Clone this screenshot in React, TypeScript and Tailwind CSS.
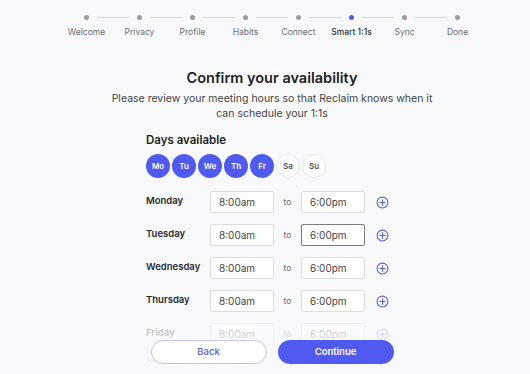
import React from "react";

const steps = ["Welcome", "Privacy", "Profile", "Habits", "Connect", "Smart 1:1s", "Sync", "Done"];
const days = [
  { d: "Mo", on: true },
  { d: "Tu", on: true },
  { d: "We", on: true },
  { d: "Th", on: true },
  { d: "Fr", on: true },
  { d: "Sa", on: false },
  { d: "Su", on: false },
];
const rows = ["Monday", "Tuesday", "Wednesday", "Thursday", "Friday"];

function PlusIcon() {
  return (
    <svg width="13" height="13" viewBox="0 0 24 24" fill="none" stroke="#5560ee" strokeWidth="2" strokeLinecap="round">
      <circle cx="12" cy="12" r="10" />
      <path d="M12 7v10M7 12h10" />
    </svg>
  );
}

export default function App() {
  return (
    <div
      className="relative h-[374px] w-[530px] overflow-hidden bg-[#f8f9fc] pl-[14px] text-[#333]"
      style={{ fontFamily: "Inter, 'Noto Sans', sans-serif" }}
    >
      {/* stepper */}
      <div className="flex justify-center pt-[15px]">
        {steps.map((s, i) => (
          <div key={s} className="relative flex w-[53px] flex-col items-center">
            {i > 0 && <div className="absolute left-[-16px] top-[2px] h-px w-[32px] bg-[#d4d5da]" />}
            <div className={`h-[5px] w-[5px] rounded-full ${i === 5 ? "bg-[#4f5bf0]" : "bg-[#9b9ca1]"}`} />
            <div
              className={`mt-[6px] whitespace-nowrap text-[8.5px] leading-[12px] ${
                i === 5 ? "font-medium text-[#2e2e33]" : "text-[#6b6c72]"
              }`}
            >
              {s}
            </div>
          </div>
        ))}
      </div>

      <div className="mt-[30px] text-center text-[14.5px] font-semibold leading-[20px] text-[#222]">
        Confirm your availability
      </div>
      <div className="mx-auto mt-[3px] w-[340px] text-center text-[10.5px] leading-[15px] text-[#444]">
        Please review your meeting hours so that Reclaim knows when it can schedule your 1:1s
      </div>

      <div className="mx-auto mt-[11px] w-[252px]">
        <div className="text-[11.5px] font-semibold leading-[16px] text-[#222]">Days available</div>
        <div className="mt-[6px] flex gap-[2px]">
          {days.map((x) => (
            <div
              key={x.d}
              className={`flex h-[24px] w-[24px] items-center justify-center rounded-full text-[8px] font-semibold ${
                x.on ? "bg-[#4f5bf0] text-white" : "border border-[#e6e7eb] bg-white font-medium text-[#555]"
              }`}
            >
              {x.d}
            </div>
          ))}
        </div>

        <div className="mt-[13px] flex flex-col gap-[11px]">
          {rows.map((r, i) => (
            <div key={r} className={`flex items-center ${i === 4 ? "opacity-40" : ""}`}>
              <div className="mt-[-1px] w-[64px] text-[9.5px] font-semibold text-[#2a2a2e]">{r}</div>
              <div className="flex h-[22px] w-[64px] items-center rounded-[2px] border border-[#dcdde2] bg-white pl-[8px] text-[10px] text-[#444]">
                8:00am
              </div>
              <div className="w-[27px] text-center text-[8.5px] text-[#666]">to</div>
              <div
                className={`flex h-[22px] w-[64px] items-center rounded-[2px] border bg-white pl-[8px] text-[10px] text-[#444] ${
                  i === 1 ? "border-[#7a7b80]" : "border-[#dcdde2]"
                }`}
              >
                6:00pm
              </div>
              <div className="ml-[11px] flex items-center">
                <PlusIcon />
              </div>
            </div>
          ))}
        </div>
        <div className="mt-[8px] text-[9px] text-[#999]">All times India Time</div>
      </div>

      {/* fade + footer */}
      <div className="pointer-events-none absolute bottom-0 left-0 h-[56px] w-full bg-gradient-to-b from-[#f8f9fc00] via-[#f8f9fcbb] to-[#f8f9fc]" />
      <div className="absolute bottom-[10px] left-0 flex w-full justify-center gap-[11px] pl-[14px]">
        <button className="h-[24px] w-[116px] rounded-full border border-[#c2c6fb] bg-white text-[9.5px] font-medium text-[#5560ee]">
          Back
        </button>
        <button className="h-[24px] w-[116px] rounded-full bg-[#4f5bf0] text-[9.5px] font-semibold text-white">
          Continue
        </button>
      </div>
    </div>
  );
}
